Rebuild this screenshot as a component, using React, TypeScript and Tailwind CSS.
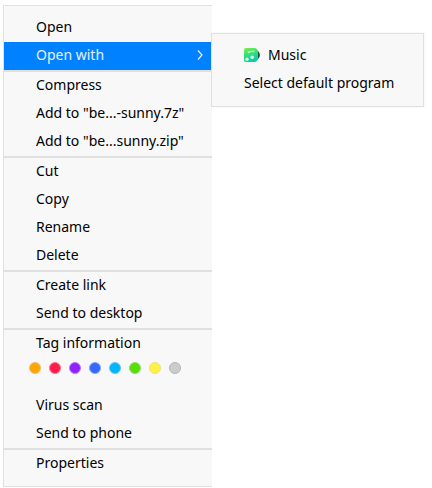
import React from "react";

const tags = [
  { name: "Orange", color: "bg-[#ffa503] border-[#f5bd62]" },
  { name: "Red", color: "bg-[#ff1c49] border-[#f67690]" },
  { name: "Purple", color: "bg-[#9023fc] border-[#b67bf2]" },
  { name: "Navy", color: "bg-[#3468ff] border-[#86a2f2]" },
  { name: "Azure", color: "bg-[#00b5ff] border-[#62c8f2]" },
  { name: "Green", color: "bg-[#58df0a] border-[#93dd68]" },
  { name: "Yellow", color: "bg-[#fef144] border-[#eee27a]" },
  { name: "Gray", color: "bg-[#cccccc] border-[#b5b5b5]" },
];

function Item({ children, active = false }: { children: React.ReactNode; active?: boolean }) {
  return (
    <button
      type="button"
      role="menuitem"
      className={
        active
          ? "flex h-7 w-full items-center bg-[#0081ff] pr-2 pb-0.5 pl-8 text-left whitespace-nowrap text-[#e6f3ff]"
          : "flex h-7 w-full items-center pr-2 pb-0.5 pl-8 text-left whitespace-nowrap text-black"
      }
    >
      {children}
    </button>
  );
}

function Separator() {
  return <div role="separator" className="h-[2px] bg-[#e0e0e0]" />;
}

function MusicIcon() {
  return (
    <svg viewBox="0 0 16 16" className="mr-2 h-4 w-4 shrink-0" aria-hidden="true">
      <defs>
        <linearGradient id="music-face" x1="0" y1="0" x2="0.3" y2="1">
          <stop offset="0" stopColor="#7af04b" />
          <stop offset="0.5" stopColor="#37dd78" />
          <stop offset="1" stopColor="#0fc9b4" />
        </linearGradient>
      </defs>
      <circle cx="10.5" cy="8" r="5.3" fill="#10352b" />
      <path d="M2 1h8.500c2 0 3.500 2 3.700 4.500v5C14 13 12.500 15 10.500 15H2c-1.300 0-2-.7-2-2V3c0-1.300.7-2 2-2z" fill="url(#music-face)" />
      <path d="M4.300 5.600C5.800 4.500 7.800 4.200 9.800 4.500" fill="none" stroke="#d5fbd0" strokeWidth="1.300" strokeLinecap="round" />
      <circle cx="3" cy="12.200" r="1.700" fill="#c6f9e0" />
      <circle cx="8.200" cy="10.200" r="1.800" fill="#d2fae5" />
    </svg>
  );
}

export default function App() {
  return (
    <main className="flex items-start bg-white pt-[5px] pr-2 pl-[3px] font-['Noto_Sans',sans-serif] text-sm">
      <div role="menu" aria-label="File" className="w-[209px] shrink-0 border-y border-l border-[#e0e0e0] bg-[#f8f8f8] py-2">
        <Item>Open</Item>
        <Item active>
          <span className="flex-1">Open with</span>
          <svg viewBox="0 0 8 12" className="h-3 w-2" fill="none" stroke="currentColor" strokeWidth="1.200" aria-hidden="true">
            <path d="M2 1.500 6 6 2 10.500" />
          </svg>
        </Item>
        <Separator />
        <Item>Compress</Item>
        <Item>Add to "be...-sunny.7z"</Item>
        <Item>Add to "be...sunny.zip"</Item>
        <Separator />
        <Item>Cut</Item>
        <Item>Copy</Item>
        <Item>Rename</Item>
        <Item>Delete</Item>
        <Separator />
        <Item>Create link</Item>
        <Item>Send to desktop</Item>
        <Separator />
        <Item>Tag information</Item>
        <div className="flex gap-2 pt-1 pb-[18px] pl-[25px]">
          {tags.map((tag) => (
            <button key={tag.name} type="button" aria-label={tag.name} className={`size-3 rounded-full border ${tag.color}`} />
          ))}
        </div>
        <Item>Virus scan</Item>
        <Item>Send to phone</Item>
        <Separator />
        <Item>Properties</Item>
      </div>
      <div
        role="menu"
        aria-label="Open with"
        className="mt-7 -ml-px max-w-64 min-w-0 flex-1 border border-[#e0e0e0] bg-[#f8f8f8] py-2 shadow-[1px_0_0_1px_#fafafa]"
      >
        <Item>
          <MusicIcon />
          Music
        </Item>
        <Item>Select default program</Item>
      </div>
    </main>
  );
}
